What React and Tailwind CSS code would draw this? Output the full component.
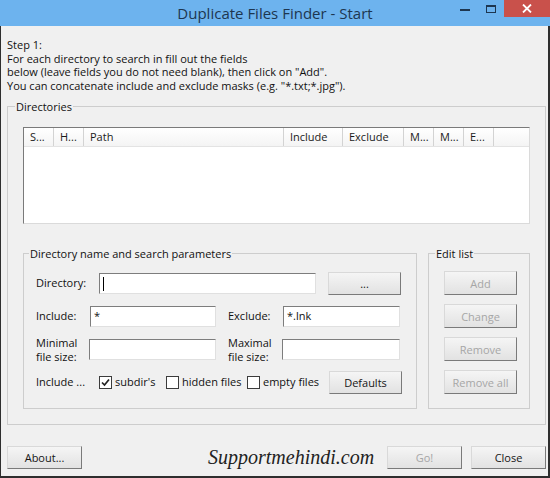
import React from 'react';

// Column widths of the directory list header (px)
const columns = [
  ['S...', 30],
  ['H...', 30],
  ['Path', 200],
  ['Include', 59],
  ['Exclude', 61],
  ['M...', 30],
  ['M...', 30],
  ['E...', 30],
];

const Button = ({ children, disabled, className = '' }) => (
  <button
    type="button"
    className={`flex items-center justify-center border border-t-[#d9d9d9] border-l-[#d9d9d9] border-r-[#7a7a7a] border-b-[#7a7a7a] bg-linear-to-b from-[#f5f5f5] to-[#e2e2e2] text-[11px] leading-none ${disabled ? 'text-[#a6a6a6]' : 'text-[#151515]'} ${className}`}
  >
    {children}
  </button>
);

const Field = ({ value, caret, className = '' }) => (
  <div
    className={`flex h-[21px] items-center border border-t-[#7d7d7d] border-l-[#7d7d7d] border-r-[#e0e0e0] border-b-[#e0e0e0] bg-white px-[3px] text-[11px] text-[#111] ${className}`}
  >
    {caret && <span className="h-[14px] w-px bg-black" />}
    {value}
  </div>
);

const Group = ({ label, labelClass, className = '', children }) => (
  <div className={`relative border border-[#cdcdcd] ${className}`}>
    <span className={`absolute -top-[8px] bg-[#f0f0f0] px-px leading-[15px] text-[#111] ${labelClass}`}>
      {label}
    </span>
    {children}
  </div>
);

const Check = ({ checked, label, className = '' }) => (
  <div className={`flex items-center gap-[3px] ${className}`}>
    <span className="flex h-[13px] w-[13px] items-center justify-center border border-[#3c3c3c] bg-white">
      {checked && (
        <svg width="9" height="9" viewBox="0 0 9 9">
          <polyline points="1,4.5 3.5,7 8,1.5" fill="none" stroke="#222" strokeWidth="1.7" />
        </svg>
      )}
    </span>
    <span>{label}</span>
  </div>
);

const TitleBar = () => (
  <div className="grid h-[26px] grid-cols-[1fr_auto_1fr] bg-[#6db3ee]">
    <div />
    <div className="self-center text-[15px] leading-none text-[#1d3650]">Duplicate Files Finder - Start</div>
    <div className="flex items-start justify-end">
      <div className="flex h-[17px] w-[26px] items-center justify-center">
        <span className="mt-[3px] h-[2px] w-[10px] bg-[#1d3650]" />
      </div>
      <div className="flex h-[17px] w-[26px] items-center justify-center">
        <span className="h-[8px] w-[10px] border border-t-2 border-[#1d3650]" />
      </div>
      <div className="flex h-[17px] w-[46px] items-center justify-center bg-[#c9514b]">
        <svg width="10" height="9" viewBox="0 0 10 9">
          <path d="M1 0.5 L9 8.5 M9 0.5 L1 8.5" stroke="#fff" strokeWidth="1.8" />
        </svg>
      </div>
    </div>
  </div>
);

const App = () => {
  return (
    <div className="flex h-[478px] w-[550px] flex-col overflow-hidden font-['Open_Sans','Segoe_UI',sans-serif] text-[11px] text-[#111]">
      <TitleBar />

      <div className="flex flex-1 flex-col border-l border-r-2 border-b-2 border-[#2e2e2e] bg-[#f0f0f0] pl-[6px] pr-[2px]">
        {/* Instructions */}
        <div className="pt-[12px] leading-[13.5px]">
          <p>Step 1:</p>
          <p>For each directory to search in fill out the fields</p>
          <p>below (leave fields you do not need blank), then click on "Add".</p>
          <p>You can concatenate include and exclude masks (e.g. "*.txt;*.jpg").</p>
        </div>

        {/* Directories */}
        <Group label="Directories" labelClass="left-[7px]" className="mt-[14px] pl-[15px] pt-[20px] pb-[15px]">
          <div className="flex h-[97px] w-[507px] flex-col border border-t-[#7a7a7a] border-l-[#7a7a7a] border-r-[#dadada] border-b-[#dadada] bg-white">
            <div className="flex h-[19px] border-b border-[#e3e3e3] bg-linear-to-b from-white to-[#f4f4f4]">
              {columns.map(([name, w], i) => (
                <div
                  key={i}
                  style={{ width: w }}
                  className="flex items-center border-r border-[#d3d3d3] pl-[6px] text-[11px] text-[#1a1a1a]"
                >
                  {name}
                </div>
              ))}
              <div className="flex-1" />
            </div>
          </div>

          <div className="mt-[29px] flex w-[507px] gap-[11px]">
            {/* Directory name and search parameters */}
            <Group
              label="Directory name and search parameters"
              labelClass="left-[5px]"
              className="flex h-[156px] w-[394px] flex-col gap-[10px] pl-[12px] pr-[14px] pt-[18px]"
            >
              <div className="flex h-[23px] items-center">
                <span className="w-[63px]">Directory:</span>
                <Field caret className="w-[217px]" />
                <Button className="ml-[12px] h-[23px] w-[73px]">...</Button>
              </div>
              <div className="flex h-[23px] items-center">
                <span className="w-[54px]">Include:</span>
                <Field value="*" className="w-[126px]" />
                <span className="ml-[12px] w-[55px]">Exclude:</span>
                <Field value="*.lnk" className="w-[117px]" />
              </div>
              <div className="flex h-[23px] items-center">
                <span className="w-[53px] leading-[14px]">Minimal<br />file size:</span>
                <Field className="w-[127px]" />
                <span className="ml-[12px] w-[54px] leading-[14px]">Maximal<br />file size:</span>
                <Field className="w-[118px]" />
              </div>
              <div className="flex h-[23px] items-center">
                <span className="w-[63px]">Include ...</span>
                <Check checked label="subdir's" className="w-[67px]" />
                <Check label="hidden files" className="w-[81px]" />
                <Check label="empty files" />
                <Button className="ml-auto h-[23px] w-[73px]">Defaults</Button>
              </div>
            </Group>

            {/* Edit list */}
            <Group
              label="Edit list"
              labelClass="left-[6px]"
              className="flex h-[156px] w-[102px] flex-col gap-[9px] pl-[15px] pt-[17px]"
            >
              <Button disabled className="h-[24px] w-[73px]">Add</Button>
              <Button disabled className="h-[24px] w-[73px]">Change</Button>
              <Button disabled className="h-[24px] w-[73px]">Remove</Button>
              <Button disabled className="h-[24px] w-[73px]">Remove all</Button>
            </Group>
          </div>
        </Group>

        {/* Bottom buttons */}
        <div className="mt-auto flex items-center pb-[7px]">
          <Button className="h-[23px] w-[75px]">About...</Button>
          <span className="ml-[126px] font-['Liberation_Serif',serif] text-[20px] italic leading-[23px] text-[#222]">
            Supportmehindi.com
          </span>
          <Button disabled className="ml-auto h-[23px] w-[75px]">Go!</Button>
          <Button className="ml-[9px] h-[23px] w-[75px]">Close</Button>
        </div>
      </div>
    </div>
  );
};

export default App;
